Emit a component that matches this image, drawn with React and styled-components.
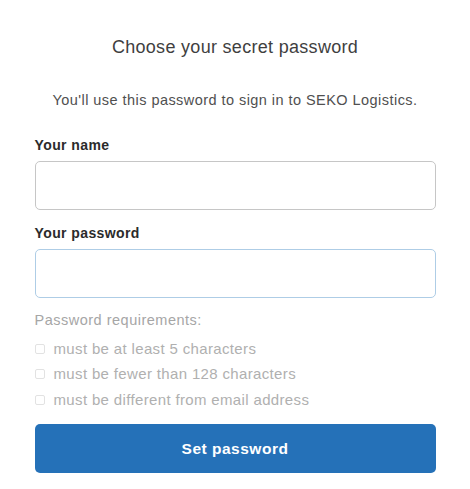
import React from "react";
import styled, { createGlobalStyle } from "styled-components";

const GlobalStyle = createGlobalStyle`
  body {
    margin: 0;
    background: #fff;
    font-family: "Liberation Sans", Arial, sans-serif;
  }
`;

const Page = styled.div`
  width: 401px;
  margin: 0 auto;
  padding-top: 36px;
  display: flex;
  flex-direction: column;
`;

const Title = styled.h1`
  margin: 0;
  font-size: 18px;
  font-weight: 400;
  letter-spacing: 0.3px;
  color: #3f3f3f;
  text-align: center;
  line-height: 22px;
`;

const Subtitle = styled.p`
  margin: 33px 0 0;
  font-size: 14.5px;
  letter-spacing: 0.45px;
  color: #505050;
  text-align: center;
  line-height: 18px;
`;

const Field = styled.div`
  display: flex;
  flex-direction: column;
  margin-top: ${(p) => p.$top}px;
`;

const Label = styled.label`
  font-size: 14px;
  font-weight: 700;
  letter-spacing: 0.4px;
  color: #2b2b2b;
  line-height: 18px;
  margin-bottom: 7px;
`;

const Input = styled.input`
  box-sizing: border-box;
  height: 49px;
  width: 100%;
  border: 1.5px solid ${(p) => (p.$focused ? "#aecde6" : "#c6c6c6")};
  border-radius: 5px;
  background: #fff;
  outline: none;
`;

const Requirements = styled.div`
  margin-top: 13px;
  display: flex;
  flex-direction: column;
`;

const ReqTitle = styled.div`
  font-size: 14.5px;
  letter-spacing: 0.5px;
  color: #a6a6a6;
  line-height: 18px;
  margin-bottom: 7px;
`;

const ReqItem = styled.div`
  display: flex;
  align-items: center;
  gap: 9px;
  font-size: 15px;
  letter-spacing: 0.35px;
  color: #b0b0b0;
  line-height: 18px;
  height: 25.5px;
`;

const Box = styled.span`
  box-sizing: border-box;
  flex: none;
  width: 10px;
  height: 10px;
  border: 1px solid #e2e2e2;
  border-radius: 2px;
`;

const Button = styled.button`
  margin-top: 11.5px;
  height: 49px;
  width: 100%;
  border: none;
  border-radius: 5px;
  background: #2571b8;
  color: #fff;
  font-family: inherit;
  font-size: 15.5px;
  letter-spacing: 0.5px;
  font-weight: 700;
`;

const requirements = [
  "must be at least 5 characters",
  "must be fewer than 128 characters",
  "must be different from email address",
];

export default function App() {
  return (
    <>
      <GlobalStyle />
      <Page>
        <Title>Choose your secret password</Title>
        <Subtitle>You'll use this password to sign in to SEKO Logistics.</Subtitle>
        <Field $top={27}>
          <Label>Your name</Label>
          <Input type="text" />
        </Field>
        <Field $top={14}>
          <Label>Your password</Label>
          <Input type="password" $focused />
        </Field>
        <Requirements>
          <ReqTitle>Password requirements:</ReqTitle>
          {requirements.map((r) => (
            <ReqItem key={r}>
              <Box />
              {r}
            </ReqItem>
          ))}
        </Requirements>
        <Button>Set password</Button>
      </Page>
    </>
  );
}
